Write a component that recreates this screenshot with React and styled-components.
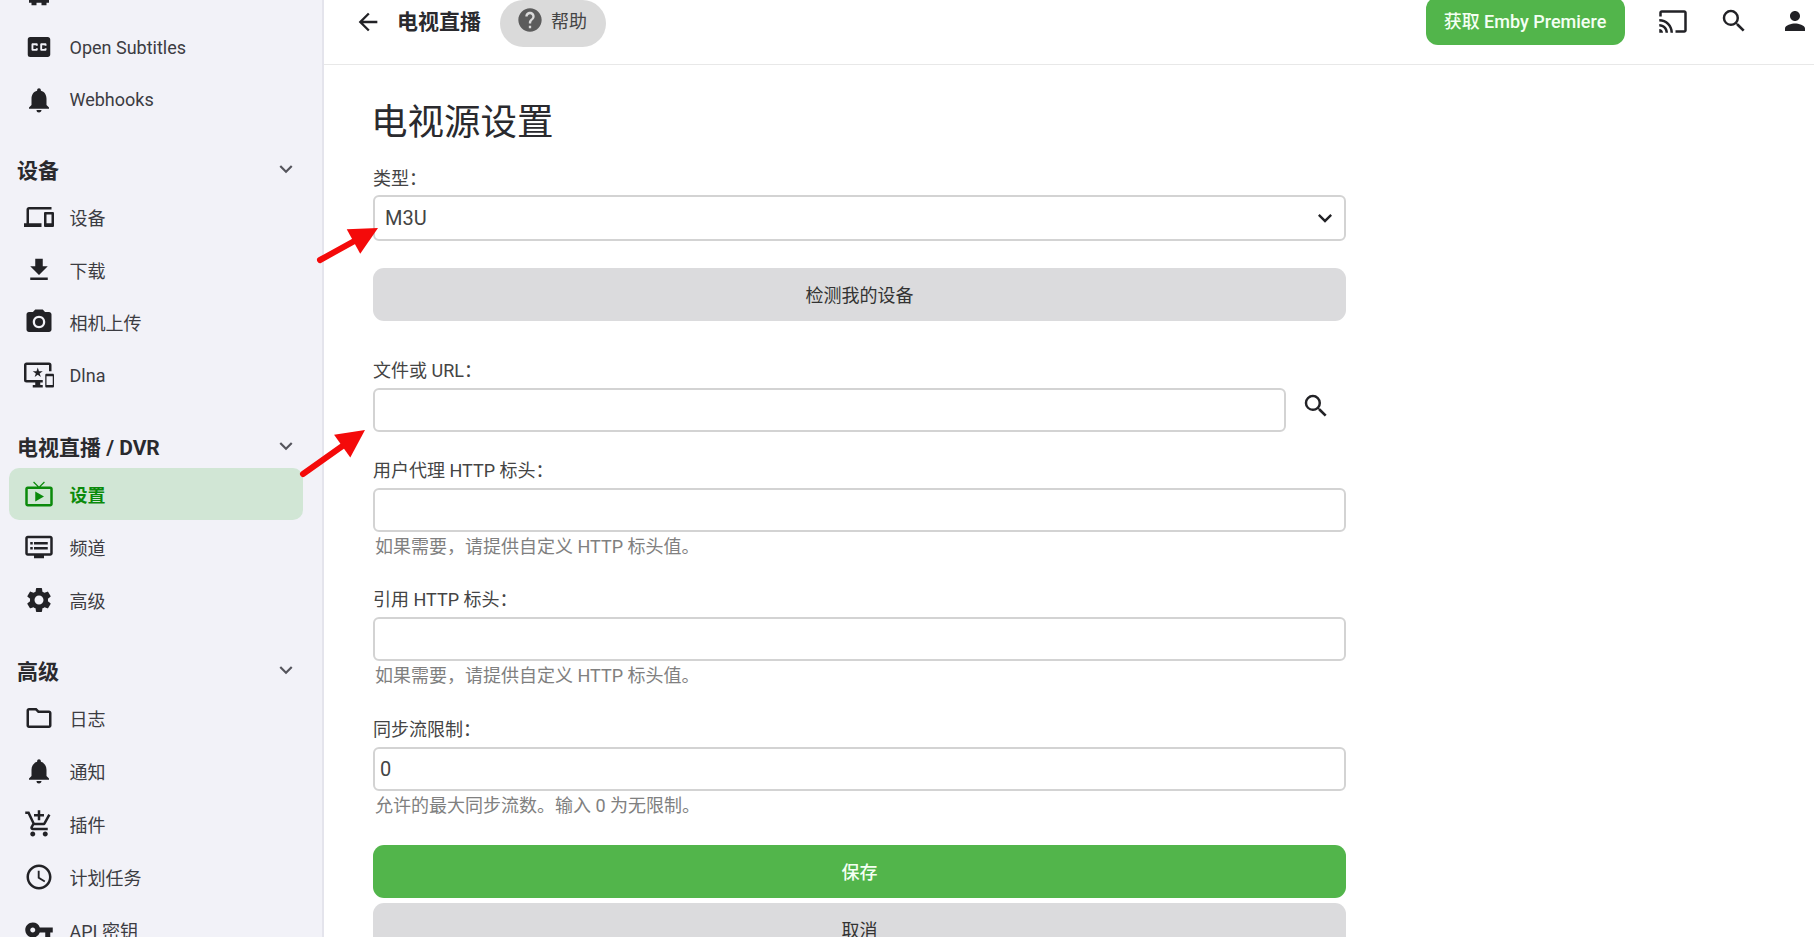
import React from 'react';
import styled, { createGlobalStyle } from 'styled-components';
import {
  MdClosedCaption, MdNotifications, MdDevices, MdFileDownload, MdPhotoCamera, MdImportantDevices,
  MdLiveTv, MdDvr, MdSettings, MdOutlineFolder, MdAddShoppingCart, MdOutlineSchedule, MdVpnKey,
  MdExpandMore, MdArrowBack, MdHelp, MdCast, MdSearch, MdPerson,
} from 'react-icons/md';

const Global = createGlobalStyle`
  html, body { margin: 0; height: 100%; overflow: hidden; background: #fff; }
  body { font-family: Roboto, "Noto Sans CJK SC", sans-serif; color: #222; }
  #root { height: 100%; }
  * { box-sizing: border-box; }
`;

const Shell = styled.div`
  position: relative;
  display: flex;
  height: 937px;
  overflow: hidden;
`;

const Sidebar = styled.nav`
  width: 324px;
  flex: none;
  height: 937px;
  overflow: hidden;
  background: #f2f2f8;
  border-right: 2px solid #e4e4ec;
  padding: 0 19px 0 9px;
`;

const NavList = styled.div`
  margin-top: -32px;
`;

const Section = styled.div`
  margin-bottom: 23px;
  &:first-child { margin-bottom: 21px; }
`;

const SectionHead = styled.div`
  height: 43px;
  display: flex;
  align-items: center;
  justify-content: space-between;
  padding: 0 4px 0 8px;
  font-size: 21px;
  font-weight: 700;
  color: #2a2a2e;
`;

const Chevron = styled(MdExpandMore)`
  font-size: 26px;
  color: #55555c;
`;

const Row = styled.div`
  height: 52.8px;
  display: flex;
  align-items: center;
  padding-left: 15px;
  gap: 15.5px;
  border-radius: 10px;
  font-size: 18px;
  font-weight: ${p => (p.$active ? 700 : 400)};
  color: ${p => (p.$active ? '#0b8a0b' : '#3c3c42')};
  background: ${p => (p.$active ? '#d1e6d5' : 'transparent')};
`;

const IconSlot = styled.span`
  width: 30px;
  height: 30px;
  flex: none;
  display: flex;
  align-items: center;
  justify-content: center;
  font-size: 32px;
  color: ${p => (p.$active ? '#0b8a0b' : '#222226')};
`;

const Main = styled.main`
  flex: 1;
  min-width: 0;
`;

const Header = styled.header`
  height: 65px;
  display: flex;
  align-items: flex-start;
  border-bottom: 1px solid #e8e8e8;
  padding-left: 29px;
  padding-right: 4.5px;
`;

const HeaderIcon = styled.span`
  display: flex;
  width: 30px;
  justify-content: center;
  font-size: ${p => p.$size || 28}px;
  margin-top: ${p => p.$top || 8}px;
  color: #222226;
`;

const HeaderTitle = styled.div`
  margin: 8px 0 0 14px;
  font-size: 21px;
  line-height: 28px;
  font-weight: 700;
  color: #2a2a2e;
`;

const HelpPill = styled.div`
  width: 106px;
  height: 47px;
  margin-left: 19px;
  background: #dadada;
  border-radius: 24px;
  display: flex;
  align-items: center;
  gap: 7px;
  padding: 0 0 8px 16px;
  font-size: 18px;
  color: #444;
`;

const HelpIcon = styled(MdHelp)`
  font-size: 28px;
  color: #5c5c5c;
`;

const Spacer = styled.div`
  flex: 1;
`;

const PremiereButton = styled.div`
  width: 199px;
  height: 48px;
  margin-top: -3px;
  padding-bottom: 2px;
  background: #52b54b;
  border-radius: 12px;
  color: #f4fff3;
  font-size: 18px;
  font-weight: 500;
  display: flex;
  align-items: center;
  justify-content: center;
  margin-right: 33px;
  white-space: pre;
`;

const HeaderActions = styled.div`
  display: flex;
  gap: 31px;
  align-items: flex-start;
`;

const Content = styled.div`
  width: 973px;
  margin-left: 49px;
`;

const Title = styled.h1`
  margin: 33px 0 0 -2px;
  font-size: 36.5px;
  line-height: 50px;
  font-weight: 400;
  color: #2a2a2e;
`;

const Label = styled.label`
  display: block;
  font-size: 18px;
  line-height: 24px;
  color: #444;
  height: 24px;
  margin-top: ${p => p.$top || 0}px;
`;

const FieldLine = styled.div`
  display: flex;
  align-items: center;
  margin-top: ${p => p.$top || 5}px;
`;

const Field = styled.div`
  flex: 1;
  height: ${p => p.$h || 44}px;
  border: 2px solid #d3d3d3;
  border-radius: 6px;
  background: #fff;
  display: flex;
  align-items: center;
  justify-content: space-between;
  padding: 0 5px 0 ${p => p.$pad || 5}px;
  font-size: 20px;
  color: #444;
`;

const SelectChevron = styled(MdExpandMore)`
  font-size: 28px;
  color: #222226;
`;

const FieldAction = styled.span`
  width: 60px;
  flex: none;
  display: flex;
  justify-content: center;
  font-size: 30px;
  margin-bottom: 8px;
  color: #222226;
`;

const Hint = styled.div`
  font-size: 18px;
  line-height: 24px;
  height: 24px;
  margin-top: 3px;
  color: #808080;
  padding-left: 2px;
`;

const Button = styled.div`
  height: 53px;
  padding-bottom: 2px;
  border-radius: 11px;
  display: flex;
  align-items: center;
  justify-content: center;
  font-size: 18px;
  background: ${p => (p.$primary ? '#52b54b' : '#dbdbdd')};
  color: ${p => (p.$primary ? '#f4fff3' : '#333')};
  font-weight: ${p => (p.$primary ? 500 : 400)};
  margin-top: ${p => p.$top || 0}px;
`;

const ArrowLayer = styled.svg`
  position: absolute;
  left: 0;
  top: 0;
  pointer-events: none;
`;

const CutIcon = () => (
  <svg width="1em" height="1em" viewBox="0 0 24 24" fill="currentColor">
    <path d="M4 2h16v17h-2v2h-4v-2h-4v2H6v-2H4z" />
  </svg>
);

const Item = ({ icon: I, label, active }) => (
  <Row $active={active}>
    <IconSlot $active={active}><I /></IconSlot>
    <span>{label}</span>
  </Row>
);

const Group = ({ title, children }) => (
  <Section>
    {title && <SectionHead>{title}<Chevron /></SectionHead>}
    {children}
  </Section>
);

const ArrowMark = ({ x1, y1, x2, y2 }) => {
  const a = Math.atan2(y2 - y1, x2 - x1);
  const p = (d, s) => `${x2 - Math.cos(a) * d - Math.sin(a) * s},${y2 - Math.sin(a) * d + Math.cos(a) * s}`;
  return (
    <g>
      <line x1={x1} y1={y1} x2={x2 - Math.cos(a) * 22} y2={y2 - Math.sin(a) * 22} stroke="#f40a0a" strokeWidth="6" strokeLinecap="round" />
      <polygon points={`${x2},${y2} ${p(28, 14)} ${p(28, -14)}`} fill="#f40a0a" />
    </g>
  );
};

export default function App() {
  return (
    <Shell>
      <Global />
      <Sidebar>
        <NavList>
          <Group>
            <Item icon={CutIcon} label="" />
            <Item icon={MdClosedCaption} label="Open Subtitles" />
            <Item icon={MdNotifications} label="Webhooks" />
          </Group>
          <Group title="设备">
            <Item icon={MdDevices} label="设备" />
            <Item icon={MdFileDownload} label="下载" />
            <Item icon={MdPhotoCamera} label="相机上传" />
            <Item icon={MdImportantDevices} label="Dlna" />
          </Group>
          <Group title="电视直播 / DVR">
            <Item icon={MdLiveTv} label="设置" active />
            <Item icon={MdDvr} label="频道" />
            <Item icon={MdSettings} label="高级" />
          </Group>
          <Group title="高级">
            <Item icon={MdOutlineFolder} label="日志" />
            <Item icon={MdNotifications} label="通知" />
            <Item icon={MdAddShoppingCart} label="插件" />
            <Item icon={MdOutlineSchedule} label="计划任务" />
            <Item icon={MdVpnKey} label="API 密钥" />
          </Group>
        </NavList>
      </Sidebar>
      <Main>
        <Header>
          <HeaderIcon><MdArrowBack /></HeaderIcon>
          <HeaderTitle>电视直播</HeaderTitle>
          <HelpPill><HelpIcon /><span>帮助</span></HelpPill>
          <Spacer />
          <PremiereButton>获取 Emby Premiere</PremiereButton>
          <HeaderActions>
            <HeaderIcon $size={33} $top={5}><MdCast /></HeaderIcon>
            <HeaderIcon $size={30} $top={6}><MdSearch /></HeaderIcon>
            <HeaderIcon $size={30} $top={6}><MdPerson /></HeaderIcon>
          </HeaderActions>
        </Header>
        <Content>
          <Title>电视源设置</Title>
          <Label $top={19}>类型：</Label>
          <FieldLine $top={4}>
            <Field $h={46} $pad={10}>M3U<SelectChevron /></Field>
          </FieldLine>
          <Button $top={27}>检测我的设备</Button>
          <Label $top={38}>文件或 URL：</Label>
          <FieldLine>
            <Field />
            <FieldAction><MdSearch /></FieldAction>
          </FieldLine>
          <Label $top={27}>用户代理 HTTP 标头：</Label>
          <FieldLine><Field /></FieldLine>
          <Hint>如果需要，请提供自定义 HTTP 标头值。</Hint>
          <Label $top={29}>引用 HTTP 标头：</Label>
          <FieldLine><Field /></FieldLine>
          <Hint>如果需要，请提供自定义 HTTP 标头值。</Hint>
          <Label $top={30}>同步流限制：</Label>
          <FieldLine><Field>0</Field></FieldLine>
          <Hint>允许的最大同步流数。输入 0 为无限制。</Hint>
          <Button $primary $top={27}>保存</Button>
          <Button $top={5}>取消</Button>
        </Content>
      </Main>
      <ArrowLayer width="420" height="520" viewBox="0 0 420 520">
        <ArrowMark x1={320} y1={260} x2={378} y2={228} />
        <ArrowMark x1={303} y1={474} x2={365} y2={430} />
      </ArrowLayer>
    </Shell>
  );
}
